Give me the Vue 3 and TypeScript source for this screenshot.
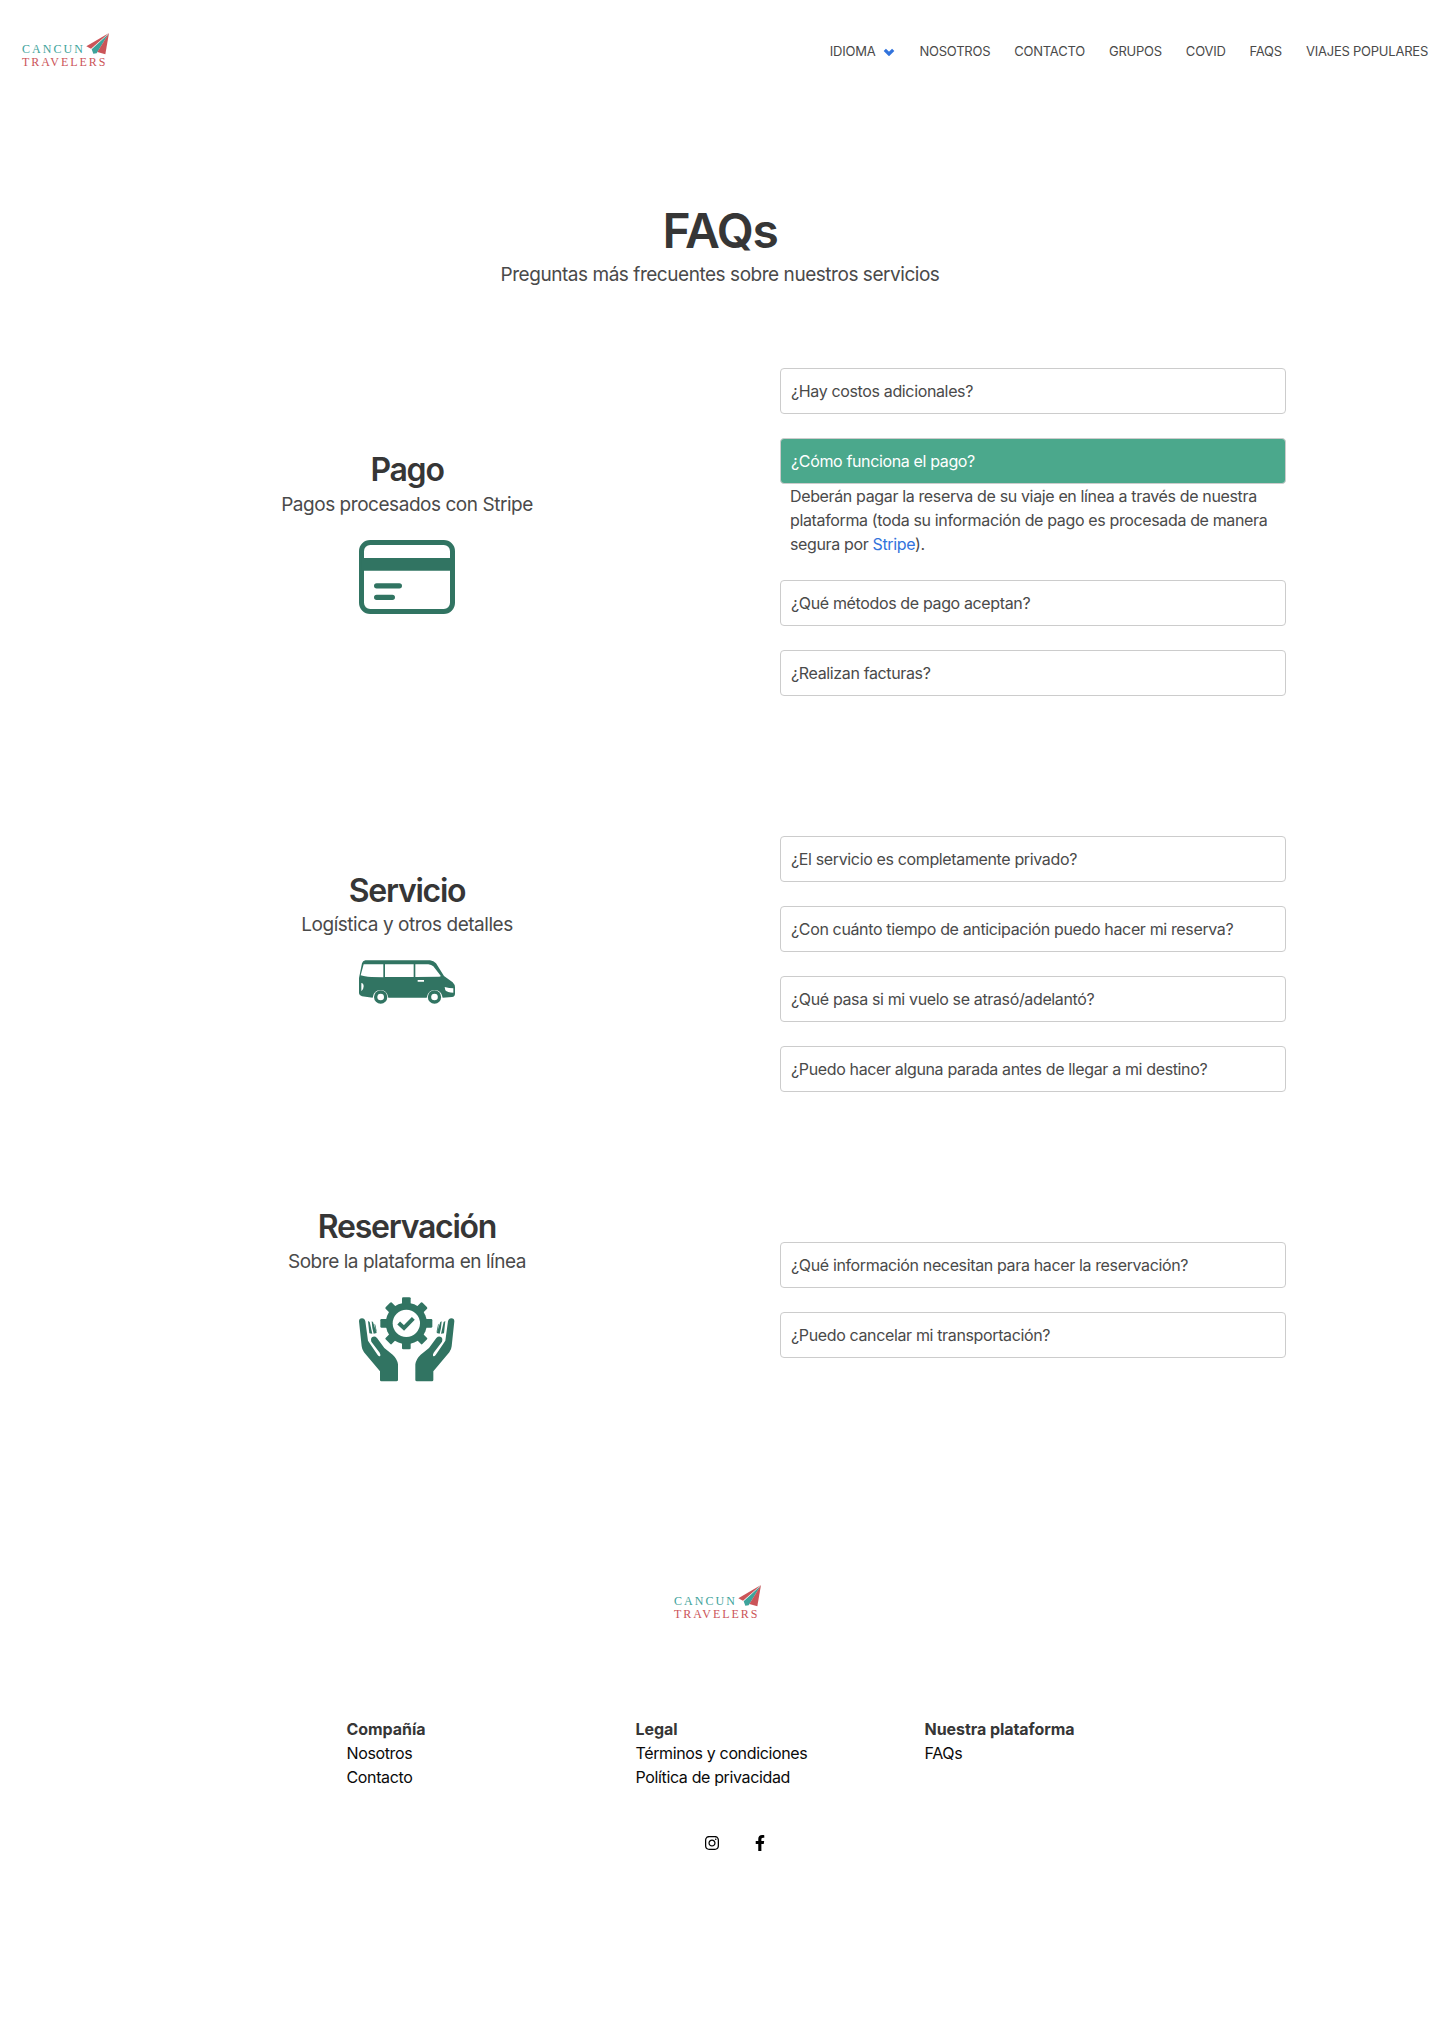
<script setup lang="ts">
import { ref } from 'vue'

interface Question {
  id: string
  text: string
}
interface Topic {
  key: 'pago' | 'servicio' | 'reservacion'
  title: string
  subtitle: string
  questions: Question[]
}

const navLinks: string[] = ['NOSOTROS', 'CONTACTO', 'GRUPOS', 'COVID', 'FAQS', 'VIAJES POPULARES']

const topics: Topic[] = [
  {
    key: 'pago',
    title: 'Pago',
    subtitle: 'Pagos procesados con Stripe',
    questions: [
      { id: 'costos', text: '¿Hay costos adicionales?' },
      { id: 'como-pago', text: '¿Cómo funciona el pago?' },
      { id: 'metodos', text: '¿Qué métodos de pago aceptan?' },
      { id: 'facturas', text: '¿Realizan facturas?' },
    ],
  },
  {
    key: 'servicio',
    title: 'Servicio',
    subtitle: 'Logística y otros detalles',
    questions: [
      { id: 'privado', text: '¿El servicio es completamente privado?' },
      { id: 'anticipacion', text: '¿Con cuánto tiempo de anticipación puedo hacer mi reserva?' },
      { id: 'vuelo', text: '¿Qué pasa si mi vuelo se atrasó/adelantó?' },
      { id: 'parada', text: '¿Puedo hacer alguna parada antes de llegar a mi destino?' },
    ],
  },
  {
    key: 'reservacion',
    title: 'Reservación',
    subtitle: 'Sobre la plataforma en línea',
    questions: [
      { id: 'informacion', text: '¿Qué información necesitan para hacer la reservación?' },
      { id: 'cancelar', text: '¿Puedo cancelar mi transportación?' },
    ],
  },
]

const footerColumns: { title: string; links: string[] }[] = [
  { title: 'Compañía', links: ['Nosotros', 'Contacto'] },
  { title: 'Legal', links: ['Términos y condiciones', 'Política de privacidad'] },
  { title: 'Nuestra plataforma', links: ['FAQs'] },
]

const openId = ref<string>('como-pago')
const toggle = (id: string): void => {
  openId.value = openId.value === id ? '' : id
}

const gearAngles: number[] = [0, 45, 90, 135, 180, 225, 270, 315]
</script>

<template>
  <div class="page">
    <header class="navbar">
      <svg class="logo" viewBox="60 60 270 120" role="img" aria-label="Cancun Travelers">
        <text x="73.300" y="130" transform="scale(.9 1)" class="logo-word teal" textLength="203">CANCUN</text>
        <text x="73.300" y="169" transform="scale(.9 1)" class="logo-word red" textLength="278">TRAVELERS</text>
        <path class="red" d="M327 69 259 109 273 116Z" />
        <path class="teal" d="M326 71 275 118 280 131 290 130Z" />
        <path class="red" d="M327 69 292 126 316 133Z" />
      </svg>
      <nav class="menu">
        <a class="menu-item">
          IDIOMA
          <svg class="chevron" viewBox="0 0 12 8"><path d="M1.800 1.800 6 6 10.200 1.800" /></svg>
        </a>
        <a v-for="link in navLinks" :key="link" class="menu-item">{{ link }}</a>
      </nav>
    </header>

    <main>
      <div class="hero">
        <h1>FAQs</h1>
        <p class="subtitle">Preguntas más frecuentes sobre nuestros servicios</p>
      </div>

      <section v-for="topic in topics" :key="topic.key" class="topic" :class="topic.key">
        <div class="intro">
          <h2>{{ topic.title }}</h2>
          <p class="subtitle">{{ topic.subtitle }}</p>

          <svg v-if="topic.key === 'pago'" class="art card" viewBox="297 300 288 222">
            <rect x="304.500" y="307.500" width="273" height="207" rx="26" class="outline" />
            <path d="M304 354H578V392H304Z" />
            <path class="bar" d="M350 437.500H418M350 472H397" />
          </svg>

          <svg v-else-if="topic.key === 'servicio'" class="art" viewBox="57 60 288 288">
            <path d="M76 61H270Q281 62 288 70L312 108L338 127Q345 134 345 142V161Q345 169 336 171L308 173Q304 150 284 150Q264 150 260 173H145Q141 150 122 150Q101 150 98 173L66 169Q58 168 57 160V114L66 70Q68 62 76 61Z" />
            <path class="cut" d="M71 73H130V112L94 111Q72 110 62 106ZM135 73H221V111H135ZM226 73H265Q274 74 280 79L302 107Q303 110 297 110L226 111Z" />
            <path class="cut" d="M64 129Q71 130 71 139Q71 149 64 154ZM233 120H252V125H233ZM314 141Q328 145 340 145V158Q322 158 316 151Z" />
            <circle cx="122" cy="171" r="20" /><circle class="cut" cx="122" cy="171" r="10" />
            <circle cx="283.500" cy="171" r="20" /><circle class="cut" cx="283.500" cy="171" r="10" />
          </svg>

          <svg v-else class="art" viewBox="57 50 288 288">
            <circle cx="199" cy="129" r="62" />
            <path v-for="angle in gearAngles" :key="angle" :transform="`rotate(${angle} 199 129)`" d="M186 72V54Q186 51 190 51H208Q212 51 212 54V72Z" />
            <circle class="cut" cx="199" cy="129" r="41" />
            <path class="check" d="M176 128 192 143 220 114" />
            <g v-for="side in [0, 1]" :key="side" :transform="side ? 'matrix(-1 0 0 1 400 0)' : undefined">
              <path d="M57 123Q57 114 66 114Q74 114 76 123L84 181L113 224Q118 230 121 226Q122 223 119 217L94 184Q91 174 97 170Q104 166 111 173L133 203L158 223Q172 236 174 252V299Q174 303 169 303H124Q120 303 120 299V273L72 216Q66 208 65 198Z" />
              <path d="M84 122 89 125 97 160 88 159ZM95 123 99 125 110 158 101 160 97 143ZM103 130 106 133 111 157 107 148Z" />
            </g>
          </svg>
        </div>

        <div class="questions">
          <div v-for="question in topic.questions" :key="question.id">
            <button class="question" :class="{ active: openId === question.id }" @click="toggle(question.id)">
              {{ question.text }}
            </button>
            <p v-if="openId === question.id && question.id === 'como-pago'" class="answer">
              Deberán pagar la reserva de su viaje en línea a través de nuestra plataforma (toda su información de
              pago es procesada de manera segura por <a>Stripe</a>).
            </p>
          </div>
        </div>
      </section>
    </main>

    <footer>
      <svg class="logo" viewBox="60 60 270 120" role="img" aria-label="Cancun Travelers">
        <text x="73.300" y="130" transform="scale(.9 1)" class="logo-word teal" textLength="203">CANCUN</text>
        <text x="73.300" y="169" transform="scale(.9 1)" class="logo-word red" textLength="278">TRAVELERS</text>
        <path class="red" d="M327 69 259 109 273 116Z" />
        <path class="teal" d="M326 71 275 118 280 131 290 130Z" />
        <path class="red" d="M327 69 292 126 316 133Z" />
      </svg>
      <div class="footer-columns">
        <div v-for="column in footerColumns" :key="column.title">
          <strong>{{ column.title }}</strong>
          <a v-for="link in column.links" :key="link">{{ link }}</a>
        </div>
      </div>
      <div class="social">
        <svg class="instagram" viewBox="0 0 448 512"><path d="M224.100 141c-63.600 0-114.900 51.300-114.900 114.900s51.300 114.900 114.900 114.900S339 319.500 339 255.900 287.700 141 224.100 141zm0 189.600c-41.100 0-74.700-33.500-74.700-74.700s33.500-74.700 74.700-74.700 74.700 33.500 74.700 74.700-33.600 74.700-74.700 74.700zm146.400-194.300c0 14.900-12 26.800-26.800 26.800-14.900 0-26.800-12-26.800-26.800s12-26.800 26.800-26.800 26.800 12 26.800 26.800zm76.100 27.200c-1.700-35.900-9.900-67.700-36.200-93.900-26.200-26.200-58-34.400-93.900-36.200-37-2.100-147.900-2.100-184.900 0-35.800 1.700-67.600 9.900-93.900 36.100s-34.400 58-36.200 93.900c-2.100 37-2.100 147.900 0 184.900 1.700 35.900 9.900 67.700 36.200 93.900s58 34.400 93.900 36.200c37 2.100 147.900 2.100 184.900 0 35.900-1.700 67.700-9.900 93.900-36.200 26.200-26.200 34.400-58 36.200-93.900 2.100-37 2.100-147.800 0-184.800zM398.800 388c-7.800 19.600-22.900 34.700-42.600 42.600-29.500 11.700-99.500 9-132.100 9s-102.700 2.600-132.100-9c-19.600-7.800-34.700-22.900-42.600-42.600-11.700-29.500-9-99.500-9-132.100s-2.600-102.700 9-132.100c7.800-19.600 22.900-34.700 42.600-42.600 29.500-11.700 99.500-9 132.100-9s102.700-2.600 132.100 9c19.600 7.800 34.700 22.900 42.600 42.600 11.700 29.500 9 99.500 9 132.100s2.700 102.700-9 132.100z" /></svg>
        <svg class="facebook" viewBox="0 0 320 512"><path d="M279.140 288l14.220-92.660h-88.910v-60.130c0-25.350 12.420-50.060 52.240-50.060h40.420V6.260S260.430 0 225.360 0c-73.220 0-121.080 44.380-121.080 124.720v70.620H22.890V288h81.390v224h100.170V288z" /></svg>
      </div>
    </footer>
  </div>
</template>

<style>
body {
  margin: 0;
  background: #fff;
}
</style>

<style scoped>
.page {
  height: 2019px;
  overflow: hidden;
  font-family: Inter, 'Liberation Sans', sans-serif;
  font-size: 16px;
  line-height: 24px;
  letter-spacing: -0.36px;
  color: #4a4a4a;
}
h1, h2, p {
  margin: 0;
}
.navbar {
  display: flex;
  justify-content: space-between;
  align-items: center;
  height: 103px;
  padding-left: 20px;
}
.logo {
  display: block;
  width: 90px;
  height: 40px;
  margin-bottom: 3px;
}
.logo-word {
  font-family: 'Liberation Serif', serif;
  font-size: 40px;
  letter-spacing: 0;
}
.teal {
  fill: #3da39b;
}
.red {
  fill: #cb5458;
}
.menu {
  display: flex;
  margin-bottom: 1px;
  font-size: 13px;
  letter-spacing: -0.23px;
}
.menu-item {
  display: flex;
  align-items: center;
  padding: 0 12px;
}
.chevron {
  width: 12px;
  height: 8px;
  margin: 1px 0 0 8px;
}
.chevron path {
  fill: none;
  stroke: #3273dc;
  stroke-width: 3.2;
}
.hero {
  height: 265px;
  padding-top: 101px;
  box-sizing: border-box;
  text-align: center;
}
h1, h2 {
  color: #363636;
  font-weight: 600;
}
h1 {
  font-size: 48px;
  line-height: 54px;
  letter-spacing: -1.3px;
}
.subtitle {
  font-size: 19px;
  line-height: 25px;
  letter-spacing: -0.46px;
}
.hero .subtitle {
  margin-top: 4px;
}
.topic {
  display: flex;
  align-items: center;
}
.pago {
  margin-bottom: 140px;
}
.servicio {
  margin-bottom: 116px;
}
.intro {
  width: 814px;
  display: flex;
  flex-direction: column;
  align-items: center;
  margin-right: -34px;
}
.pago .intro {
  padding-top: 1px;
}
h2 {
  margin-top: 1px;
  font-size: 32px;
  line-height: 36px;
  letter-spacing: -1.25px;
}
.intro .subtitle {
  margin-top: 4px;
}
.servicio .subtitle {
  margin: 3px 0 1px;
}
.art {
  width: 96px;
  height: 96px;
  margin-top: 22.5px;
  fill: #317462;
}
.art.card {
  height: 74px;
}
.outline {
  fill: none;
  stroke: #317462;
  stroke-width: 15;
}
.bar {
  stroke: #317462;
  stroke-width: 16;
  stroke-linecap: round;
}
.cut {
  fill: #fff;
}
.check {
  fill: none;
  stroke: #317462;
  stroke-width: 12;
}
.questions {
  width: 506px;
  display: flex;
  flex-direction: column;
  gap: 24px;
}
.question {
  display: block;
  width: 100%;
  height: 46px;
  padding: 0 10px;
  border: 1px solid #ccc;
  border-radius: 4px;
  background: #fff;
  color: inherit;
  font: inherit;
  letter-spacing: inherit;
  text-align: left;
}
.question.active {
  background: #4ba88c;
  color: #fff;
}
.answer {
  padding: 0 10px;
}
.answer a {
  color: #3273dc;
}
footer {
  padding-top: 189px;
}
footer .logo {
  margin: 0 0 0 671.7px;
}
.footer-columns {
  display: grid;
  grid-template-columns: repeat(3, 289px);
  margin: 95.5px 0 0 346.5px;
}
.footer-columns strong,
.footer-columns a {
  display: block;
}
.footer-columns strong {
  color: #363636;
  letter-spacing: -0.06px;
}
.footer-columns a {
  color: #0a0a0a;
}
.social {
  display: flex;
  gap: 36px;
  margin: 46px 0 0 705px;
}
.social svg {
  height: 16px;
  width: 14px;
}
.social .facebook {
  width: 10px;
}
</style>
